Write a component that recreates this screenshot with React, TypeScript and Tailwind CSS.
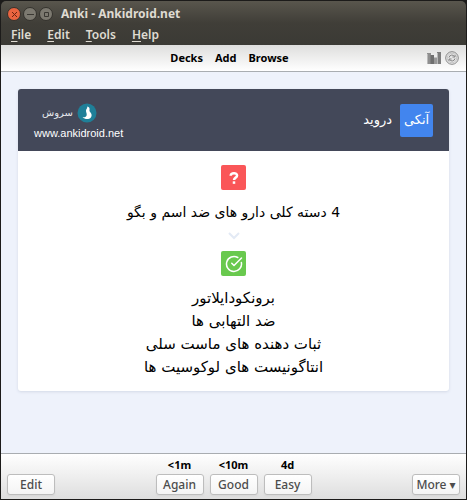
import { CircleCheckBig } from "lucide-react";

const menus = ["File", "Edit", "Tools", "Help"];

const links = ["Decks", "Add", "Browse"];

const answers = [
  { due: "<1m", label: "Again" },
  { due: "<10m", label: "Good" },
  { due: "4d", label: "Easy" },
];

const lines = [
  "برونکودایلاتور",
  "ضد التهابی ها",
  "ثبات دهنده های ماست سلی",
  "انتاگونیست های لوکوسیت ها",
];

const buttonClass =
  "h-[21px] w-12 rounded-[3px] border border-[#bdbdbd] bg-gradient-to-b from-white to-[#f4f4f4] text-[12px] leading-none font-medium text-[#4c4c4c] shadow-xs";

function TitleBar() {
  return (
    <header className="rounded-t-[5px] bg-gradient-to-b from-[#59564d] via-[#403e38] to-[#3b3a35] text-[#dfdbd2]">
      <div className="flex h-[26px] items-center px-[6px]">
        <div className="flex gap-[2px]">
          <button
            aria-label="Close"
            className="flex size-[14px] items-center justify-center rounded-full border border-[#34322d] bg-[#ea6440]"
          >
            <svg className="size-[7px]" viewBox="0 0 7 7" stroke="#6b2412" aria-hidden>
              <path d="M1 1l5 5M6 1L1 6" />
            </svg>
          </button>
          <button
            aria-label="Minimize"
            className="flex size-[14px] items-center justify-center rounded-full border border-[#34322d] bg-[#7c7970]"
          >
            <svg className="size-[7px]" viewBox="0 0 7 7" stroke="#3a3833" aria-hidden>
              <path d="M0 3.5h7" />
            </svg>
          </button>
          <button
            aria-label="Maximize"
            className="flex size-[14px] items-center justify-center rounded-full border border-[#34322d] bg-[#7c7970]"
          >
            <svg className="size-[7px]" viewBox="0 0 7 7" fill="none" stroke="#3a3833" aria-hidden>
              <path d="M1.5 1.5h4v4h-4z" />
            </svg>
          </button>
        </div>
        <h1 className="ml-2 text-[12px] font-bold">Anki - Ankidroid.net</h1>
      </div>
      <nav className="flex h-[18px] items-center gap-4 px-[10px] pb-[2px] text-[12px] font-semibold">
        {menus.map((name) => (
          <button key={name} className="leading-4">
            <span className="underline underline-offset-2">{name[0]}</span>
            {name.slice(1)}
          </button>
        ))}
      </nav>
    </header>
  );
}

function Toolbar() {
  return (
    <div className="grid h-[27px] grid-cols-[1fr_auto_1fr] items-center border-b border-[#a9adb1] bg-gradient-to-b from-[#dededd] to-white px-[7px]">
      <nav className="col-start-2 flex gap-3 pr-2 text-[11px] font-bold text-black">
        {links.map((name) => (
          <a key={name} href="#">
            {name}
          </a>
        ))}
      </nav>
      <div className="flex justify-end gap-1">
        <button aria-label="Statistics">
          <svg className="size-[14px]" viewBox="0 0 14 14" aria-hidden>
            <path fill="#8f8f8f" d="M0 2h4v11H0z" />
            <path fill="#6f6f6f" d="M3.500 4H7v9H3.500z" />
            <path fill="#999999" d="M7 6.500h3V13H7z" />
            <path fill="#7d7d7d" d="M10 1h4v12h-4z" />
            <path stroke="#b9b9b9" d="M.5 3v10M10.500 2v11" />
          </svg>
        </button>
        <button aria-label="Sync">
          <svg className="size-[14px]" viewBox="0 0 14 14" fill="none" stroke="#858585" aria-hidden>
            <circle cx="7" cy="7" r="6.300" />
            <circle cx="7" cy="7" r="4.800" fill="#e4e4e4" stroke="#c4c4c4" />
            <path d="M4 6.500a3 3 0 015.500-1M10 7.500a3 3 0 01-5.500 1M7.500 6H10V4M6.500 8H4v2" />
          </svg>
        </button>
      </div>
    </div>
  );
}

function CardHeader() {
  return (
    <div
      dir="ltr"
      className="flex h-[62px] items-center justify-between rounded-t-[3px] bg-[#434859] px-4 text-white"
    >
      <div className="flex flex-col pt-[6px]">
        <div className="flex items-center gap-1 pl-2">
          <span className="text-[10px] leading-5 text-[#e4e6eb]">سروش</span>
          <svg className="size-5" viewBox="0 0 20 20" aria-hidden>
            <circle cx="10" cy="10" r="9.500" fill="#1f7f98" />
            <path
              fill="#ffffff"
              d="M10.300 3.500c2 .3 2.600 1.800 2.200 3.500-.2 1 .1 1.600 1 2.500 2.200 2.300 1 6.200-2.500 6.500-2.200.2-4-.3-5.500-1.700 2.500.2 4-.6 4.200-2.300.2-1.500-.8-2.500-.7-4.400.1-1.600 1.500-2.200 1.300-4.100z"
            />
          </svg>
        </div>
        <a href="#" className="font-['Liberation_Sans',sans-serif] text-[11px] leading-5">
          www.ankidroid.net
        </a>
      </div>
      <div className="flex items-center gap-2">
        <span className="text-[13px]">دروید</span>
        <span className="flex size-[33px] items-center justify-center rounded-[2px] bg-[#4285ee] text-[13px]">
          آنکی
        </span>
      </div>
    </div>
  );
}

function Card() {
  return (
    <article
      dir="rtl"
      className="rounded-[3px] bg-white font-['DejaVu_Sans',sans-serif] shadow-[0_1px_3px_#d3d9e6]"
    >
      <CardHeader />
      <div className="flex flex-col items-center pt-[14px] pb-3 text-black">
        <span className="flex size-[25px] items-center justify-center rounded-[2px] bg-[#fa5658]">
          <svg className="h-[14px] w-[10px]" viewBox="0 0 12 16" fill="none" stroke="#ffffff" aria-hidden>
            <path strokeWidth="3" d="M2 5.300C2.300 1.500 9.700 1.300 9.700 5c0 2.700-3.700 2.400-3.700 5.500" />
            <path strokeWidth="3" d="M6 12v3" />
          </svg>
        </span>
        <p className="mt-2 text-[14px] leading-7">4 دسته کلی دارو های ضد اسم و بگو</p>
        <svg className="mt-[6px] h-2 w-3" viewBox="0 0 12 8" fill="none" stroke="#e3eaf5" aria-hidden>
          <path strokeWidth="2" d="M1 1l5 5 5-5" />
        </svg>
        <span className="mt-[11px] flex size-[25px] items-center justify-center rounded-[2px] bg-[#69c94e]">
          <CircleCheckBig className="size-[18px] text-white" />
        </span>
        <div className="mt-[11px] text-center text-[15px] leading-[23px]">
          {lines.map((line) => (
            <p key={line}>{line}</p>
          ))}
        </div>
      </div>
    </article>
  );
}

function AnswerBar() {
  return (
    <footer className="grid grid-cols-[1fr_auto_1fr] items-end border-t border-[#a9adb1] bg-gradient-to-b from-white to-[#dedede] px-[6px] pt-[2px] pb-1">
      <div>
        <button className={buttonClass}>Edit</button>
      </div>
      <div className="flex gap-[6px]">
        {answers.map(({ due, label }) => (
          <div key={label} className="flex flex-col items-center">
            <span className="text-[11px] leading-[18px] font-bold text-black">{due}</span>
            <button className={buttonClass}>{label}</button>
          </div>
        ))}
      </div>
      <div className="text-right">
        <button className={buttonClass}>More ▾</button>
      </div>
    </footer>
  );
}

export default function App() {
  return (
    <div className="flex min-h-screen flex-col border border-[#1c1b1a] bg-[#1c1b1a] font-['Noto_Sans','DejaVu_Sans',sans-serif]">
      <TitleBar />
      <Toolbar />
      <main className="grow bg-[#eef2fb] px-[17px] pt-[17px] pb-6">
        <Card />
      </main>
      <AnswerBar />
    </div>
  );
}
